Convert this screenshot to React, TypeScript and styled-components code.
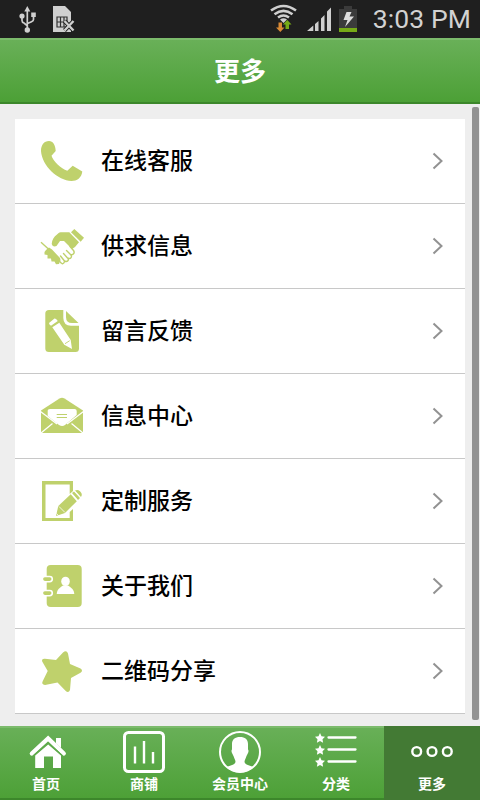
import React from "react";
import styled, { createGlobalStyle } from "styled-components";

const GlobalStyle = createGlobalStyle`
  * { box-sizing: border-box; }
  body { margin: 0; background: #eeeeee; font-family: "Noto Sans CJK SC", "Noto Sans", sans-serif; }
  svg { display: block; flex: none; }
`;

const Screen = styled.div`
  width: 480px;
  height: 800px;
  display: flex;
  flex-direction: column;
  background: #eeeeee;
  overflow: hidden;
`;

const StatusBar = styled.div`
  height: 38px;
  flex: none;
  display: flex;
  justify-content: space-between;
  background: #1f1f1f;
`;

const StatusGroup = styled.div`
  display: flex;
`;

const Clock = styled.span`
  width: 112px;
  padding-right: 9px;
  text-align: right;
  font: 400 26.5px/38px Roboto, sans-serif;
  letter-spacing: 0.1px;
  color: #d2d2d2;
  white-space: nowrap;
`;

const Header = styled.header`
  height: 66px;
  flex: none;
  display: flex;
  align-items: center;
  justify-content: center;
  padding-bottom: 3px;
  background: linear-gradient(#69b058, #4ca036);
  border-top: 2px solid #7cbb6c;
  border-bottom: 2px solid #3c872b;
`;

const Title = styled.h1`
  margin: 0;
  font-size: 26px;
  line-height: 36px;
  font-weight: 700;
  color: #fff;
`;

const Content = styled.main`
  height: 622px;
  flex: none;
  display: flex;
  padding: 15px 0 0 15px;
`;

const List = styled.div`
  width: 450px;
  height: 595px;
  background: #fff;
`;

const Row = styled.div`
  height: 85px;
  display: flex;
  align-items: center;
  padding: 0 21px 0 23px;
  border-bottom: 1px solid #c8c8c8;
`;

const RowLabel = styled.span`
  flex: 1;
  padding: 0 0 4px 15px;
  font-size: 23px;
  line-height: 32px;
  font-weight: 500;
  color: #000;
`;

const ScrollThumb = styled.div`
  width: 7px;
  height: 613px;
  margin: -12px 0 0 7px;
  border-radius: 2px;
  background: #929292;
`;

const TabBar = styled.nav`
  height: 74px;
  flex: none;
  display: grid;
  grid-template-columns: repeat(5, 96px);
  background: linear-gradient(#69b058, #4ca036);
`;

const Tab = styled.div<{ $active?: boolean }>`
  display: flex;
  flex-direction: column;
  align-items: center;
  padding-top: 3px;
  color: #fff;
  background: ${(p) => (p.$active ? "#437a34" : "transparent")};
  border-top: 2px solid ${(p) => (p.$active ? "#437a34" : "#7cbb6c")};
  border-bottom: 2px solid ${(p) => (p.$active ? "#437a34" : "#3c872b")};
`;

const TabLabel = styled.span<{ $shift: number }>`
  margin-top: -2px;
  margin-left: ${(p) => p.$shift}px;
  font-size: 14px;
  line-height: 20px;
  font-weight: 700;
`;

const G = "#bfd16c";

const RowIcon = ({ children }: { children: React.ReactNode }) => (
  <svg width="48" height="48" viewBox="0 0 48 48" fill={G}>
    {children}
  </svg>
);

const rows: { label: string; icon: React.ReactNode }[] = [
  {
    label: "在线客服",
    icon: (
      <path d="M11 4C6 4 3 8 3 14C4 29 20 43.5 33.500 44C39 44 43.500 41 44.300 34.500L34.700 28.700L29.300 33.700C23 31.500 15 24 13.500 18.700L17.700 14C17.500 8 15 4 11 4Z" />
    ),
  },
  {
    label: "供求信息",
    icon: (
      <>
        <path d="M36.300 7L46 15.700L42.700 19.700L33 10.300Z" />
        <path d="M13.700 22C14 18 16 14.500 19 12.500C21 10.500 22 10.300 24 10.300H31.300L41 20.300L37 25L34 27L26 19H22L18.500 24C16.500 25 14.500 24.500 13.700 22Z" />
        <path d="M3 20.200L11 27.500" stroke={G} strokeWidth="1.4" />
        <path d="M8 28L11 25.500L14 27.500L22 36L22.500 38L21 42L18 42.300L16.500 39.500L13.500 39.500L13 36.500L9.500 36.500L9.500 33L6.500 32.500L6.500 30Z" />
        <g fill="none" stroke={G} strokeWidth="1.4" strokeLinecap="round">
          <path d="M21 38C23 42.500 26 43 26.500 39L22.500 34M26.500 39C29.500 40.500 31.500 38 29.500 36L25.500 31.500M29.500 36C33 37.500 34.500 34.500 32.500 32.500L28.500 28.500M32.500 32.500C35.500 33.500 37 30.500 35.500 28.500L32 24.500" />
        </g>
      </>
    ),
  },
  {
    label: "留言反馈",
    icon: (
      <>
        <path d="M11 3H25.300V11Q25.500 18.700 33 18.700H41V41.500Q41 45 37.500 45H11Q7.300 45 7.300 41.500V6.500Q7.300 3 11 3Z" />
        <path d="M28 4L40.500 16H34Q28 16 28 10Z" />
        <path fill="#fff" d="M11 16L16.500 11.500Q18 11 19.800 14L13 18.700Q11 17.500 11 16ZM14.300 20.300L21.300 15.700L32.700 33L34 42L26.300 37.800Z" />
        <path d="M27 36.700L31.700 33.700" stroke={G} strokeWidth="0.9" />
      </>
    ),
  },
  {
    label: "信息中心",
    icon: (
      <>
        <path d="M3 18.500L21.500 6.500Q24 5 26.500 6.500L45 18.500V41H3Z" />
        <path fill="#fff" d="M9.700 19V18.500Q9.700 17 12 17H36.500Q38.700 17 38.700 19V23L27 33Q24.300 35 21 33L9.700 24Z" />
        <path fill="none" stroke="#fff" strokeWidth="1.3" d="M2.500 19.500L19 32M45.500 19.500L29 32M3 41L14.500 31.500M45 41L33.500 31.500" />
        <path d="M18.700 22.500H29M18.700 25.500H29" stroke={G} strokeWidth="1.2" />
      </>
    ),
  },
  {
    label: "定制服务",
    icon: (
      <>
        <path d="M4 4H35V14L31.700 17V7.500H7.500V41H31.700V35L35 32V44H4Z" />
        <path d="M18 39L20.300 29L32.700 17.300L38.800 24.300L27 36Z" />
        <path d="M34 16L36 14.500L42 21L40 23ZM37 13.500Q39.500 12 42 14.200Q45 17 43 20Z" />
        <path fill="none" stroke="#fff" strokeWidth="0.8" d="M21 29.500L27 35.500M18.500 36.500L20.500 38.500" />
        <path d="M33.300 16.500L39.500 23.500M36.300 13.800L42.500 20.700" stroke="#fff" strokeWidth="1" />
      </>
    ),
  },
  {
    label: "关于我们",
    icon: (
      <>
        <rect x="8.700" y="3" width="35" height="42" rx="4" />
        <g fill={G} stroke="#fff" strokeWidth="1.600">
          <rect x="4.300" y="14.500" width="10" height="5.200" rx="2.600" />
          <rect x="4.300" y="28.500" width="10" height="5.200" rx="2.600" />
        </g>
        <g fill="#fff">
          <ellipse cx="27.500" cy="19.400" rx="4.300" ry="4.700" />
          <path d="M18.700 32C19 27.500 22 25.500 25 23.500H30C33 25.500 36 27.500 36.300 32Z" />
        </g>
      </>
    ),
  },
  {
    label: "二维码分享",
    icon: (
      <path d="M25 5.500Q28.500 2.500 30 6.500L32 17L42.500 21.500Q45.500 23.700 42.500 25.700L33 31L32 43Q30.500 46.500 27.500 43.700L19.500 35.500L7 38Q3 37.500 4.800 34L9.700 24L4.200 14.500Q3.300 11.500 7 11.800L18 13Z" />
    ),
  },
];

const starPath = (x: number, y: number) =>
  `M${x} ${y - 5}l1.500 3.200 3.500 .5-2.500 2.500.6 3.600-3.100-1.700-3.100 1.700.6-3.600-2.500-2.500 3.500-.5Z`;

const tabs: { label: string; icon: React.ReactNode; shift: number; active?: boolean }[] = [
  {
    label: "首页",
    shift: -4,
    icon: (
      <g fill="#fff">
        <path d="M12 21.500L28.300 6.500L44 21.500" transform="translate(-.2 1)" fill="none" stroke="#fff" strokeWidth="4.200" strokeLinecap="round" />
        <path d="M36 7H41V17L36 12.500Z" />
        <path d="M15.200 24.500L28.200 13.500L41 24.500V37H33V25.500H24V37H15.200Z" />
        <path d="M13.500 24.700L28.200 11.700L42.500 24.700" fill="none" stroke="#5fab4c" strokeWidth="1.200" />
      </g>
    ),
  },
  {
    label: "商铺",
    shift: 0,
    icon: (
      <g fill="none" stroke="#fff">
        <rect x="8.500" y="1.500" width="39" height="39" rx="4" strokeWidth="3" />
        <path strokeWidth="2.400" d="M19 15.500V32.500M28 10V32.500M37 21V32.500" />
      </g>
    ),
  },
  {
    label: "会员中心",
    shift: 0,
    icon: (
      <>
        <circle cx="28" cy="21" r="20" fill="none" stroke="#fff" strokeWidth="2" />
        <path fill="#fff" d="M28 6C33 6 36 8.500 36 13V18.500Q37 19.500 36 22L34.500 25C33.500 28 32.500 29 32.500 31C33 34 38 34.500 41.500 36C37.500 40 33 41.500 28 41.500C23 41.500 18.500 40 14.500 36C18 34.500 23 34 23.500 31C23.500 29 22.500 28 21.500 25L20 22Q19 19.500 20 18.500V13C20 8.500 23 6 28 6Z" />
      </>
    ),
  },
  {
    label: "分类",
    shift: 0,
    icon: (
      <>
        <path fill="#fff" d={starPath(12, 7) + starPath(12, 19) + starPath(12, 31)} />
        <path d="M20.500 6.500H47.500M20.500 18.500H47.500M20.500 30.500H47.500" stroke="#fff" strokeWidth="2.300" strokeLinecap="round" />
      </>
    ),
  },
  {
    label: "更多",
    shift: 0,
    active: true,
    icon: (
      <g fill="none" stroke="#fff" strokeWidth="2.400">
        <circle cx="12.700" cy="20.500" r="4.400" />
        <circle cx="28" cy="20.500" r="4.400" />
        <circle cx="43.300" cy="20.500" r="4.400" />
      </g>
    ),
  },
];

export default function App() {
  return (
    <Screen>
      <GlobalStyle />
      <StatusBar>
        <svg width="120" height="38" viewBox="0 0 120 38">
          <g fill="none" stroke="#cfcfcf" strokeWidth="1.700">
            <path d="M27.300 10V30M22 17V20.500Q22 22.500 24 23L27 25.500M33.500 15V19.500Q33.500 21 31.500 21.700L27.500 23.500" />
          </g>
          <g fill="#cfcfcf">
            <path d="M27.300 6L30.300 11.500H24.300Z" />
            <circle cx="22" cy="16" r="2.600" />
            <path d="M31.200 12.500H35.800V17H31.200Z" />
            <circle cx="27.300" cy="30" r="2.700" />
            <path d="M53 6H65L71 12V32H53Z" />
          </g>
          <path d="M57 17H67V27H57ZM60.500 17V27M64 17V27M57 22H67" fill="none" stroke="#303030" strokeWidth="1.200" />
          <path d="M64.500 21L73.500 30.500M73.500 21L64.500 30.500" stroke="#1f1f1f" strokeWidth="4" />
          <path d="M64.500 21L73.500 30.500M73.500 21L64.500 30.500" stroke="#cfcfcf" strokeWidth="2.400" />
        </svg>
        <StatusGroup>
          <svg width="103" height="38" viewBox="265 0 103 38">
            <g fill="none" stroke="#cfcfcf" strokeWidth="2.600">
              <path d="M271 10.500Q283.500 1.500 296 10.500M274.500 14.200Q283.500 7.500 292.500 14.200M278 17.500Q283.500 13.500 289 17.500" />
            </g>
            <path fill="#cfcfcf" d="M280 19.500Q283.500 17 287 19.500L283.500 23Z" />
            <path fill="#d98a35" d="M278.500 22.500H282V27.500H284.500L280.300 32L276 27.500H278.500Z" />
            <path fill="#76aa17" d="M285.500 29H289V24.500H291.500L287.300 20L283 24.500H285.500Z" />
            <path fill="#cfcfcf" d="M307 31L313.300 25.500V31ZM315 24L318.500 21V31H315ZM321 18.500L324.500 15V31H321ZM327 11.500L331 7.500V31H327Z" />
            <path fill="#3b3b3b" d="M344 6H352V9H357V28H339V9H344Z" />
            <path fill="#76aa17" d="M339 28H357V32H339Z" />
            <path fill="#ddd" d="M346.500 12H351.500L349.500 16.500H354L345 27L347.500 20H343.500Z" />
          </svg>
          <Clock>3:03 PM</Clock>
        </StatusGroup>
      </StatusBar>
      <Header>
        <Title>更多</Title>
      </Header>
      <Content>
        <List>
          {rows.map((r) => (
            <Row key={r.label}>
              <RowIcon>{r.icon}</RowIcon>
              <RowLabel>{r.label}</RowLabel>
              <svg width="12" height="18" viewBox="0 0 12 18">
                <path d="M1.500 1.500L9.500 9L1.500 16.500" fill="none" stroke="#929292" strokeWidth="2" />
              </svg>
            </Row>
          ))}
        </List>
        <ScrollThumb />
      </Content>
      <TabBar>
        {tabs.map((t) => (
          <Tab key={t.label} $active={t.active}>
            <svg width="56" height="44" viewBox="0 0 56 44">
              {t.icon}
            </svg>
            <TabLabel $shift={t.shift}>{t.label}</TabLabel>
          </Tab>
        ))}
      </TabBar>
    </Screen>
  );
}
